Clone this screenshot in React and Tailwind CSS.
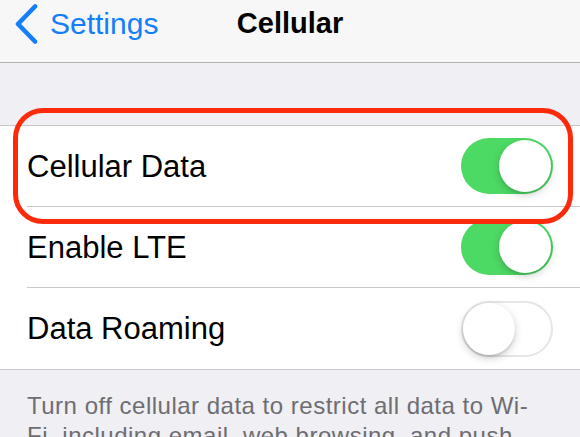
import React from 'react'

function Toggle({ on }) {
    if (on) {
        return (
            <div className="w-[92px] h-[56px] rounded-full bg-[#4cd964] p-[2px] flex justify-end">
                <div className="w-[52px] h-[52px] rounded-full bg-white shadow-[0_3px_8px_rgba(0,0,0,0.18),0_2px_2px_rgba(0,0,0,0.08)]" />
            </div>
        )
    }
    return (
        <div className="w-[92px] h-[56px] rounded-full bg-white border-2 border-[#e5e5ea] flex justify-start">
            <div className="w-[52px] h-[52px] rounded-full bg-white shadow-[0_3px_8px_rgba(0,0,0,0.2),0_2px_2px_rgba(0,0,0,0.1)]" />
        </div>
    )
}

function Row({ label, on, last }) {
    return (
        <div className="pl-[27px]">
            <div className={`h-[81px] pr-[27px] flex items-center justify-between ${last ? '' : 'border-b border-[#c8c7cc]'}`}>
                <span className="text-[31px] text-black leading-none">{label}</span>
                <Toggle on={on} />
            </div>
        </div>
    )
}

export default function App() {
    const rows = [
        { label: 'Cellular Data', on: true },
        { label: 'Enable LTE', on: true },
        { label: 'Data Roaming', on: false },
    ]

    return (
        <div className="relative w-[580px] h-[437px] overflow-hidden bg-[#efeff4]" style={{ fontFamily: '"Liberation Sans", Arial, sans-serif' }}>
            {/* nav bar */}
            <div className="h-[63px] bg-[#f7f7f8] border-b border-[#b2b2b2] grid grid-cols-[1fr_auto_1fr] items-start pt-[4px]">
                <div className="flex items-center pl-[14px] gap-[12px] text-[#147efb]">
                    <svg width="24" height="40" viewBox="0 0 24 40" fill="none">
                        <path d="M21 2.5 L4 20 L21 37.5" stroke="#147efb" strokeWidth="4.6" strokeLinecap="round" strokeLinejoin="round" />
                    </svg>
                    <span className="text-[30px] leading-[36px]">Settings</span>
                </div>
                <div className="text-[29px] leading-[36px] font-bold text-black pt-[1px]">Cellular</div>
                <div />
            </div>

            <div className="h-[62px]" />

            {/* settings group */}
            <div className="bg-white border-y border-[#c8c7cc]">
                {rows.map((r, i) => (
                    <Row key={r.label} label={r.label} on={r.on} last={i === rows.length - 1} />
                ))}
            </div>

            {/* footer note */}
            <div className="pl-[27px] pr-[20px] pt-[21px] text-[24px] leading-[30px] tracking-[0.5px] text-[#6d6d72]">
                Turn off cellular data to restrict all data to Wi-<br />
                Fi, including email, web browsing, and push
            </div>

            {/* red highlight */}
            <div className="absolute left-[13px] top-[108px] w-[560px] h-[116px] border-[5px] border-[#fb2a0b] rounded-[30px] pointer-events-none" />
        </div>
    )
}
